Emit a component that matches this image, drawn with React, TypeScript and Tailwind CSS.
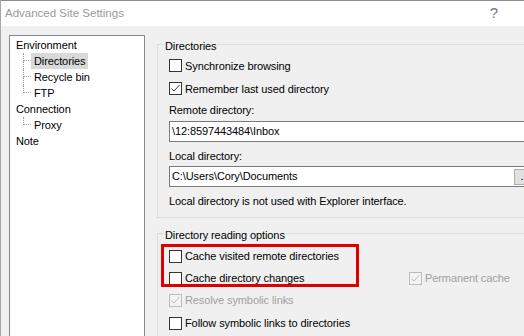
import type { ReactNode } from 'react'

function CheckBox({
  checked = false,
  disabled = false,
  children,
}: {
  checked?: boolean
  disabled?: boolean
  children: ReactNode
}) {
  return (
    <label className={`flex items-center ${disabled ? 'text-[#a0a0a0]' : 'text-black'}`}>
      <span
        className={`flex h-[13px] w-[13px] shrink-0 items-center justify-center border ${
          disabled ? 'border-[#bcbcbc] bg-[#f3f3f3]' : 'border-[#333] bg-white'
        }`}
      >
        {checked && (
          <svg width="11" height="11" viewBox="0 0 11 11">
            <path
              d="M1.5 5.5 L4 8 L9.5 2"
              fill="none"
              stroke={disabled ? '#bcbcbc' : '#333'}
              strokeWidth="1"
            />
          </svg>
        )}
      </span>
      <span className="ml-[3px] leading-4">{children}</span>
    </label>
  )
}

function TreeParent({ label }: { label: string }) {
  return (
    <div className="flex h-4 items-center pl-[3px]">
      <span className="px-[3px] leading-4">{label}</span>
    </div>
  )
}

function TreeChild({ label, last = false, selected = false }: { label: string; last?: boolean; selected?: boolean }) {
  return (
    <div className="flex h-4 pl-[13px]">
      <div className="flex w-[8px] flex-col">
        <div className="h-2 border-b border-l border-dotted border-[#a0a0a0]" />
        <div className={last ? 'h-2' : 'h-2 border-l border-dotted border-[#a0a0a0]'} />
      </div>
      <span className={`flex items-center px-[3px] leading-4 ${selected ? 'bg-[#d9d9d9]' : ''}`}>{label}</span>
    </div>
  )
}

function Legend({ children }: { children: ReactNode }) {
  return <legend className="ml-[-5px] px-[1px] pt-[4px] leading-4">{children}</legend>
}

export default function App() {
  return (
    <div className="relative h-[336px] w-[524px] overflow-hidden border-l border-[#a6a6a6] bg-[#f0f0f0] font-['Liberation_Sans',Arial,sans-serif] text-[11px] tracking-[-0.1px] text-black">
      {/* title bar */}
      <div className="flex h-[26px] items-center justify-between border-t border-[#8c8c8c] bg-white pl-[4px] pr-[26px]">
        <span className="text-[11.5px] tracking-normal text-[#999]">Advanced Site Settings</span>
        <span className="text-[15px] text-[#777]">?</span>
      </div>

      <div className="flex pl-[8px] pt-[9px]">
        {/* tree */}
        <div className="h-[320px] w-[136px] shrink-0 border border-[#828790] bg-white pt-[1px]">
          <TreeParent label="Environment" />
          <TreeChild label="Directories" selected />
          <TreeChild label="Recycle bin" />
          <TreeChild label="FTP" last />
          <TreeParent label="Connection" />
          <TreeChild label="Proxy" last />
          <TreeParent label="Note" />
        </div>

        {/* page */}
        <div className="ml-[12px] w-[400px] shrink-0 pt-[-2px]">
          <fieldset className="-mt-[1px] border border-[#dcdcdc] px-[11px] pb-[8px]">
            <Legend>Directories</Legend>
            <div className="flex h-[23px] items-center">
              <CheckBox>Synchronize browsing</CheckBox>
            </div>
            <div className="flex h-[23px] items-center">
              <CheckBox checked>Remember last used directory</CheckBox>
            </div>
            <div className="mt-[2px] leading-4">Remote directory:</div>
            <div className="mt-[3px] flex h-[21px] items-center border border-[#7a7a7a] bg-white pl-[2px]">
              \12:8597443484\Inbox
            </div>
            <div className="mt-[6px] leading-4">Local directory:</div>
            <div className="mt-[2px] flex h-[21px] items-center border border-[#7a7a7a] bg-white pl-[2px]">
              <span className="w-[342px] shrink-0">C:\Users\Cory\Documents</span>
              <span className="flex h-[16px] w-[22px] items-center justify-center border border-[#adadad] bg-[#e1e1e1] leading-none">
                ...
              </span>
            </div>
            <div className="mt-[6px] leading-4">Local directory is not used with Explorer interface.</div>
          </fieldset>

          <fieldset className="mt-[5px] border border-[#dcdcdc] px-[11px] pb-[8px]">
            <Legend>Directory reading options</Legend>
            <div className="relative pt-[2px]">
              <div className="flex h-[22px] items-center">
                <CheckBox>Cache visited remote directories</CheckBox>
              </div>
              <div className="flex h-[22px] items-center">
                <div className="w-[240px] shrink-0">
                  <CheckBox>Cache directory changes</CheckBox>
                </div>
                <CheckBox checked disabled>
                  Permanent cache
                </CheckBox>
              </div>
              <div className="flex h-[22px] items-center">
                <CheckBox checked disabled>
                  Resolve symbolic links
                </CheckBox>
              </div>
              <div className="mt-[1px] flex h-[22px] items-center">
                <CheckBox>Follow symbolic links to directories</CheckBox>
              </div>
              {/* highlight annotation */}
              <div className="pointer-events-none absolute left-[-8px] top-[1px] h-[43px] w-[198px] border-[3px] border-[#e00000]" />
            </div>
          </fieldset>
        </div>
      </div>
    </div>
  )
}
